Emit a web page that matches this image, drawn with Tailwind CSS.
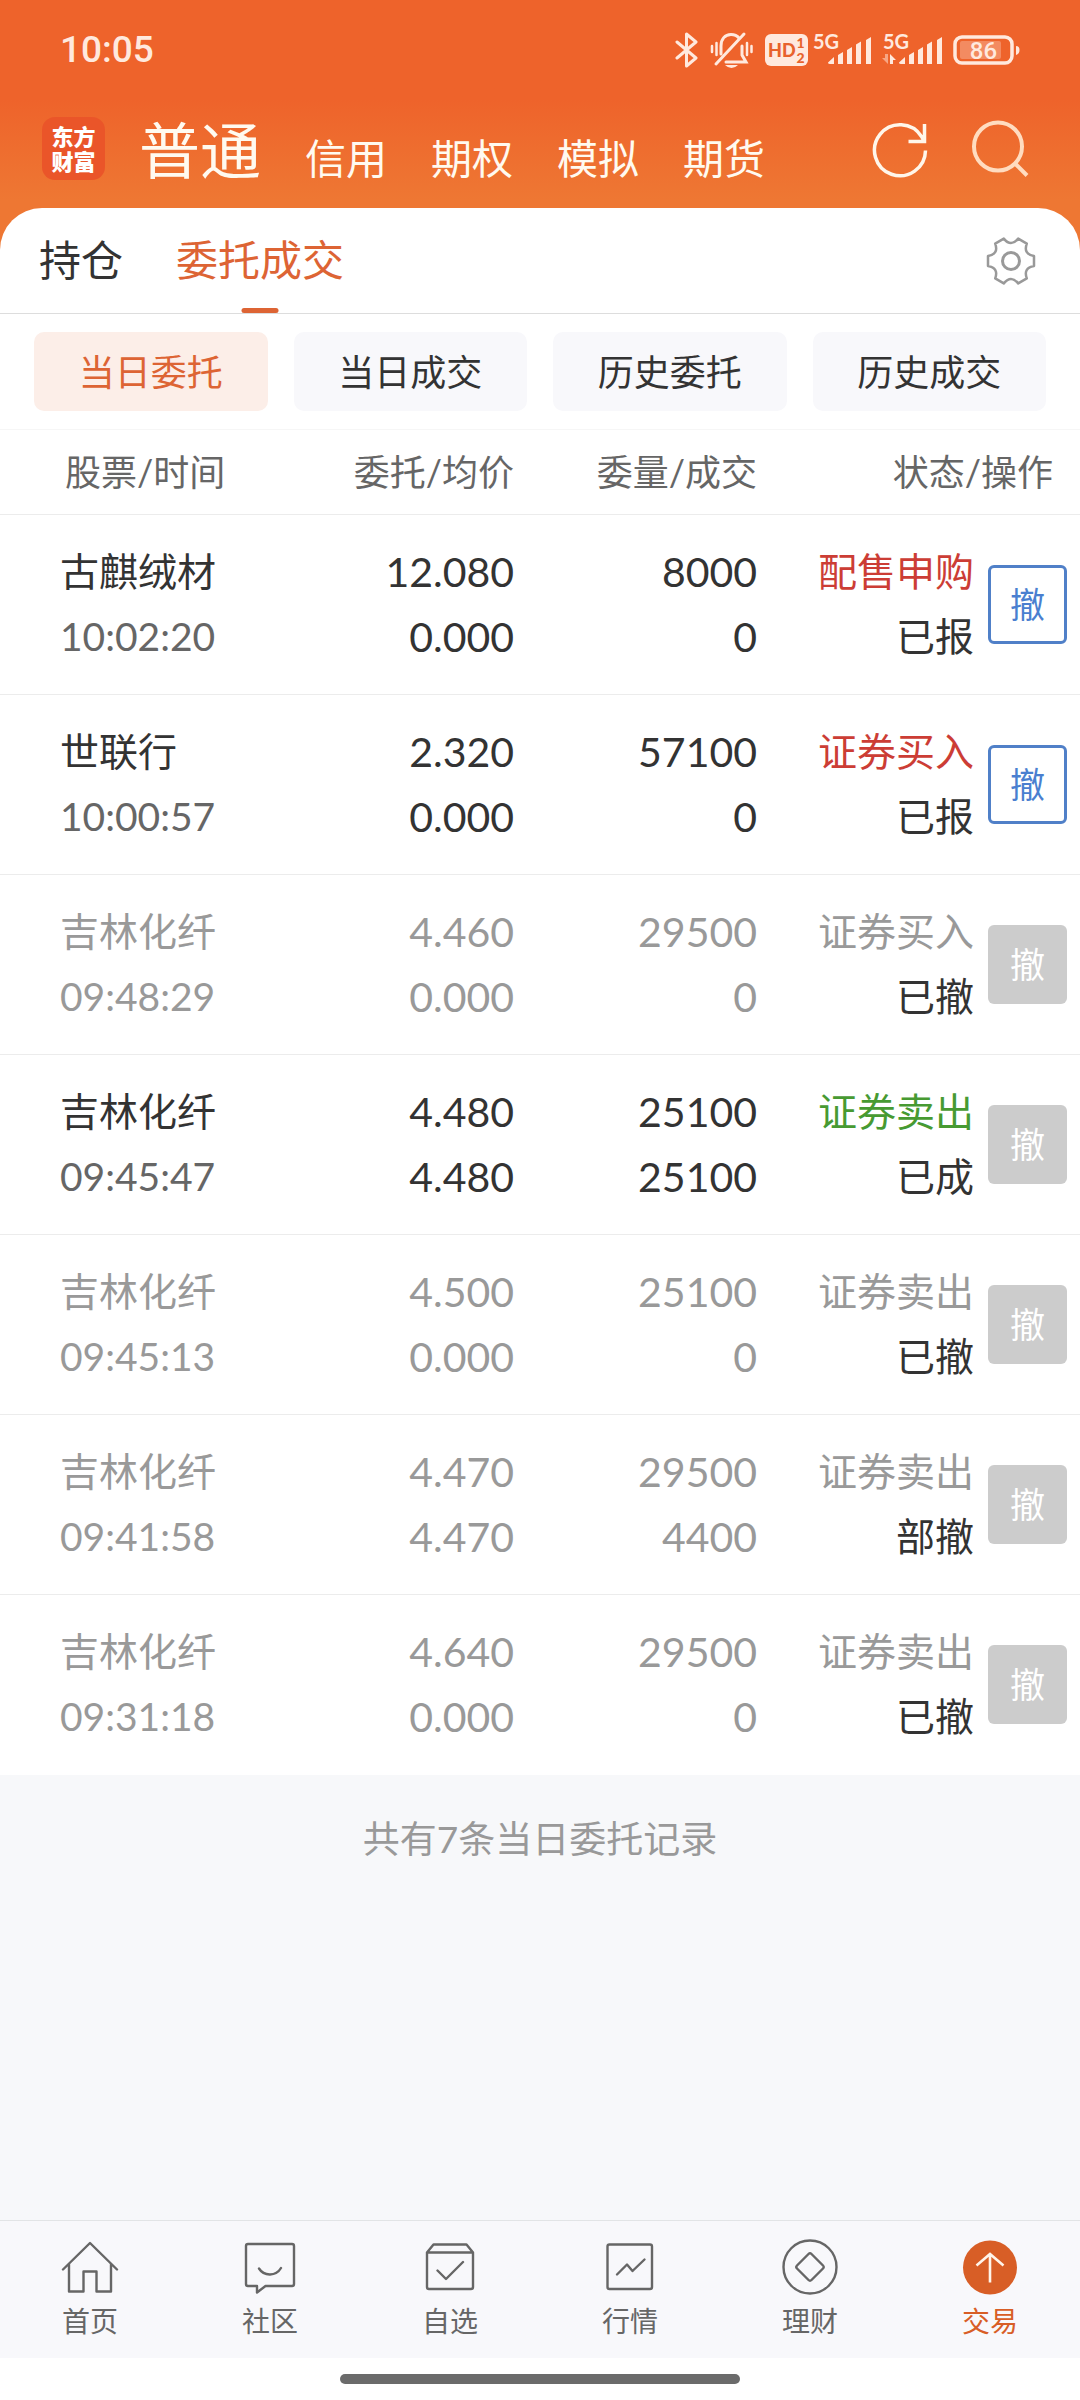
<!DOCTYPE html>
<html lang="zh-CN">
<head>
    <meta charset="UTF-8">
    <meta name="viewport" content="width=device-width, initial-scale=1.0">
    <title>委托成交</title>
    <script src="https://cdn.jsdelivr.net/npm/@tailwindcss/browser@4"></script>
</head>
<body class="bg-[#f7f8fa] min-h-screen flex flex-col text-[#333333] font-['Lato','Noto_Sans_CJK_SC',sans-serif]">
    <header class="bg-linear-to-b from-[#ee632b] from-40% to-[#ee7733] to-80% pb-[53px]">
        <!-- status bar -->
        <div class="h-[100px] flex items-center justify-between px-[60px] text-[#ffe9de]">
            <span class="font-['Roboto'] font-medium text-[37px]">10:05</span>
            <div class="flex items-center gap-[11px]">
                <svg class="w-6 h-10" viewBox="0 0 24 40" fill="none" stroke="currentColor" stroke-width="3" stroke-linejoin="round" stroke-linecap="round"><path d="M2 12 21 28 11.500 36V4L21 12 2 28"/></svg>
                <svg class="w-11 h-10" viewBox="0 0 44 40" fill="none" stroke="currentColor" stroke-width="3" stroke-linecap="round">
                    <path d="M11 24V16C11 9 15 4.500 21 4.500C24 4.500 27 5.500 29 8M16 32H36L32 25V16"/>
                    <path d="M6 34 34 4"/>
                    <path d="M15 35H28Q25 38 21.500 38T15 35Z" fill="currentColor" stroke="none"/>
                    <path d="M2 16V22M6.500 13V25M37 13V25M41.500 16V22" stroke-width="2.500"/>
                </svg>
                <div class="flex items-center gap-[5px]">
                    <svg class="w-[43px] h-10" viewBox="0 0 43 40">
                        <rect y="4" width="43" height="32" rx="6" fill="currentColor"/>
                        <g fill="#e8622c" font-family="Lato" font-weight="900">
                            <text x="3" y="27" font-size="18">HD</text>
                            <text x="31.500" y="18" font-size="14">1</text>
                            <text x="31.500" y="32.500" font-size="14">2</text>
                        </g>
                    </svg>
                    <svg class="w-[58px] h-10" viewBox="0 0 58 40" fill="currentColor">
                        <text x="0" y="19" font-family="Lato" font-weight="700" font-size="20">5G</text>
                        <path d="M15 32.500 21 27V34H17Q15 34 15 32.500ZM25 25 30 22V34H25ZM34 20 39 17V34H34ZM43 14.500 48 11.500V34H43ZM53 10 58 7V34H53Z"/>
                    </svg>
                </div>
                <svg class="w-[60px] h-10" viewBox="0 0 60 40" fill="currentColor">
                    <text x="1" y="19" font-family="Lato" font-weight="700" font-size="20">5G</text>
                    <path d="M17 32.500 23 27V34H19Q17 34 17 32.500ZM27 25 32 22V34H27ZM36 20 41 17V34H36ZM45 14.500 50 11.500V34H45ZM55 10 60 7V34H55Z"/>
                    <path d="M3 24H6V34L0 28H3Z" opacity=".5"/>
                    <path d="M8 24 14 30H11V34H8Z"/>
                </svg>
                <svg class="w-[67px] h-10" viewBox="0 0 67 40">
                    <rect x="2" y="7" width="57" height="26" rx="7" fill="none" stroke="currentColor" stroke-width="3.500"/>
                    <path d="M63 16Q66.500 16 66.500 20T63 25Z" fill="currentColor"/>
                    <rect x="7" y="11" width="41" height="18" rx="2" fill="currentColor" opacity=".3"/>
                    <text x="30.500" y="28.500" text-anchor="middle" font-family="Roboto" font-weight="500" font-size="24" fill="currentColor">86</text>
                </svg>
            </div>
        </div>
        <!-- account switcher -->
        <div class="h-[97px] flex items-center pl-[42px] pr-[50px]">
            <div class="size-[63px] rounded-[13px] bg-[#ea5529] text-white font-black text-[22px] leading-[25px] text-center flex items-center justify-center">东方<br>财富</div>
            <nav class="flex-1 flex items-baseline gap-11 ml-[34px] pt-3 text-[41px] leading-[90px] text-[#fffaf0]">
                <a href="#" class="text-[61px]">普通</a>
                <a href="#">信用</a>
                <a href="#">期权</a>
                <a href="#">模拟</a>
                <a href="#">期货</a>
            </nav>
            <div class="flex items-center gap-10">
                <button type="button" aria-label="刷新">
                    <svg class="size-[60px]" viewBox="0 0 60 60" fill="none" stroke="#fff6ea" stroke-width="3.500"><path d="M55.500 31.500A25.500 25.500 0 1 1 51.500 17.500L54 22M54.500 5V22.500H38.500"/></svg>
                </button>
                <button type="button" aria-label="搜索">
                    <svg class="size-[60px]" viewBox="0 0 60 60" fill="none" stroke="#ffdcc0" stroke-width="4"><circle cx="28" cy="27.500" r="24"/><path d="M45 44.500 57 56.500"/></svg>
                </button>
            </div>
        </div>
    </header>

    <main class="flex-1 -mt-[42px]">
        <div class="bg-white rounded-t-[42px]">
            <div class="h-[106px] flex items-center border-b border-[#dddddd] pl-[39px] pr-[44px]">
                <nav class="flex-1 h-full flex gap-[53px] text-[42px] leading-[104px]">
                    <a href="#">持仓</a>
                    <a href="#" class="relative text-[#dd6434]">委托成交<span class="absolute bottom-0 left-1/2 -translate-x-1/2 w-[37px] h-[5px] rounded-sm bg-[#dd6434]"></span></a>
                </nav>
                <button type="button" aria-label="设置">
                    <svg class="size-[50px]" viewBox="-25 -25 50 50" fill="none" stroke="#999999" stroke-width="2.500" stroke-linejoin="round">
                        <path d="M23-5V5Q12 7 15.800 17.400L7.200 22.400Q0 13.500-7.200 22.400L-15.800 17.400Q-12 7-23 5V-5Q-12-7-15.800-17.400L-7.200-22.400Q0-13.500 7.200-22.400L15.800-17.400Q12-7 23-5Z"/>
                        <circle r="8.500" stroke-width="3"/>
                    </svg>
                </button>
            </div>
            <div class="grid grid-cols-4 gap-[26px] px-[34px] py-[18px] border-b border-[#f6f6f6] text-[36px]">
                <button type="button" class="h-[79px] rounded-[10px] bg-[#fceee8] text-[#dd6434]">当日委托</button>
                <button type="button" class="h-[79px] rounded-[10px] bg-[#f8f8fb]">当日成交</button>
                <button type="button" class="h-[79px] rounded-[10px] bg-[#f8f8fb]">历史委托</button>
                <button type="button" class="h-[79px] rounded-[10px] bg-[#f8f8fb]">历史成交</button>
            </div>
            <table class="w-full table-fixed border-separate border-spacing-0 text-right">
                <colgroup>
                    <col>
                    <col class="w-[243px]">
                    <col class="w-[243px]">
                    <col class="w-[217px]">
                    <col class="w-[106px]">
                </colgroup>
                <thead class="text-[36px] leading-[84px] text-[#666666]">
                    <tr>
                        <th class="font-normal text-left pl-[65px] border-b border-[#ececec]">股票/时间</th>
                        <th class="font-normal border-b border-[#ececec]">委托/均价</th>
                        <th class="font-normal border-b border-[#ececec]">委量/成交</th>
                        <th colspan="2" class="font-normal pr-[27px] border-b border-[#ececec]">状态/操作</th>
                    </tr>
                </thead>
                <tbody id="orders" class="text-[39px] leading-[65px]"></tbody>
            </table>
        </div>
        <p class="py-8 text-center text-[37px] leading-[64px] text-[#999999]">共有7条当日委托记录</p>
    </main>

    <footer class="bg-white">
        <nav class="grid grid-cols-6 bg-[#f8f8fb] border-t border-[#e2e4e6] pt-4 pb-[13px] text-[28px] leading-[48px] text-[#666666]">
            <a href="#" class="flex flex-col items-center">
                <svg class="size-[60px]" viewBox="0 0 60 60" fill="none" stroke="currentColor" stroke-width="2.400" stroke-linejoin="round" stroke-linecap="round"><path d="M3 32.500 30 6 57 32.500M9 27V54.500H23.500V34.500H36.500V54.500H51V27"/></svg>
                首页
            </a>
            <a href="#" class="flex flex-col items-center">
                <svg class="size-[60px]" viewBox="0 0 60 60" fill="none" stroke="currentColor" stroke-width="2.400" stroke-linejoin="round" stroke-linecap="round"><path d="M8 7H52Q54 7 54 9V47Q54 49 52 49H25.500L17 55.500V49H8Q6 49 6 47V9Q6 7 8 7ZM19 31.500C24 39.500 36 39.500 41 31"/></svg>
                社区
            </a>
            <a href="#" class="flex flex-col items-center">
                <svg class="size-[60px]" viewBox="0 0 60 60" fill="none" stroke="currentColor" stroke-width="2.400" stroke-linejoin="round" stroke-linecap="round"><path d="M7 15.500V50Q7 52 9 52H51Q53 52 53 50V15.500L46.500 7.500H13.500L7 15.500H53M17.500 33.500 26 42 43 25"/></svg>
                自选
            </a>
            <a href="#" class="flex flex-col items-center">
                <svg class="size-[60px]" viewBox="0 0 60 60" fill="none" stroke="currentColor" stroke-width="2.400" stroke-linejoin="round" stroke-linecap="round"><rect x="7.500" y="7.500" width="44.500" height="44.500" rx="2"/><path d="M17 37.500 27 27.500 32.500 34 44.500 22.500"/></svg>
                行情
            </a>
            <a href="#" class="flex flex-col items-center">
                <svg class="size-[60px]" viewBox="0 0 60 60" fill="none" stroke="currentColor" stroke-width="2.400" stroke-linejoin="round"><circle cx="30" cy="30" r="26.500"/><path d="M31.500 17 43 28.500Q44.500 30 43 31.500L31.500 43Q30 44.500 28.500 43L17 31.500Q15.500 30 17 28.500L28.500 17Q30 15.500 31.500 17Z"/></svg>
                理财
            </a>
            <a href="#" class="flex flex-col items-center text-[#d85e26]">
                <svg class="size-[60px]" viewBox="0 0 60 60" fill="none" stroke="#fff4ea" stroke-width="2.600"><circle cx="30" cy="30.500" r="27" fill="currentColor" stroke="none"/><path d="M30 45.500V17M16.500 28.500 30 17 43.500 28.500"/></svg>
                交易
            </a>
        </nav>
        <div class="h-[42px] pt-4">
            <div class="mx-auto w-[37%] h-[10px] rounded-full bg-[#6b6b6b]"></div>
        </div>
    </footer>

    <script>
        // state: open = can be cancelled, done = filled, off = cancelled
        const orders = [
            { name: '古麒绒材', time: '10:02:20', price: '12.080', avg: '0.000', qty: 8000, filled: 0, type: '配售申购', side: 'buy', status: '已报', state: 'open' },
            { name: '世联行', time: '10:00:57', price: '2.320', avg: '0.000', qty: 57100, filled: 0, type: '证券买入', side: 'buy', status: '已报', state: 'open' },
            { name: '吉林化纤', time: '09:48:29', price: '4.460', avg: '0.000', qty: 29500, filled: 0, type: '证券买入', side: 'buy', status: '已撤', state: 'off' },
            { name: '吉林化纤', time: '09:45:47', price: '4.480', avg: '4.480', qty: 25100, filled: 25100, type: '证券卖出', side: 'sell', status: '已成', state: 'done' },
            { name: '吉林化纤', time: '09:45:13', price: '4.500', avg: '0.000', qty: 25100, filled: 0, type: '证券卖出', side: 'sell', status: '已撤', state: 'off' },
            { name: '吉林化纤', time: '09:41:58', price: '4.470', avg: '4.470', qty: 29500, filled: 4400, type: '证券卖出', side: 'sell', status: '部撤', state: 'off' },
            { name: '吉林化纤', time: '09:31:18', price: '4.640', avg: '0.000', qty: 29500, filled: 0, type: '证券卖出', side: 'sell', status: '已撤', state: 'off' },
        ];

        const sideColor = { buy: 'text-[#cc3d35]', sell: 'text-[#479a32]' };
        const cell = 'border-b border-[#ececec] group-last:border-white';

        document.getElementById('orders').innerHTML = orders.map((o) => {
            const off = o.state === 'off';
            const main = off ? 'text-[#999999]' : 'text-[#333333]';
            const time = off ? 'text-[#999999]' : 'text-[#666666]';
            const type = off ? 'text-[#999999]' : sideColor[o.side];
            const button = o.state === 'open'
                ? '<button type="button" class="block size-[79px] rounded-[6px] border-3 border-[#5080c8] text-[#4a7fd0] text-[35px] leading-none">撤</button>'
                : '<button type="button" disabled class="block size-[79px] rounded-[6px] bg-[#cccccc] text-white text-[35px] leading-none">撤</button>';
            return `
                <tr class="group">
                    <td class="${cell} pt-6 pb-[25px] pl-[60px] text-left ${main}">${o.name}<div class="${time}">${o.time}</div></td>
                    <td class="${cell} pt-6 pb-[25px] text-[41px] ${main}">${o.price}<div>${o.avg}</div></td>
                    <td class="${cell} pt-6 pb-[25px] text-[41px] ${main}">${o.qty}<div>${o.filled}</div></td>
                    <td class="${cell} pt-6 pb-[25px] ${type}">${o.type}<div class="text-[#333333]">${o.status}</div></td>
                    <td class="${cell} pl-[14px]">${button}</td>
                </tr>`;
        }).join('');
    </script>
</body>
</html>
